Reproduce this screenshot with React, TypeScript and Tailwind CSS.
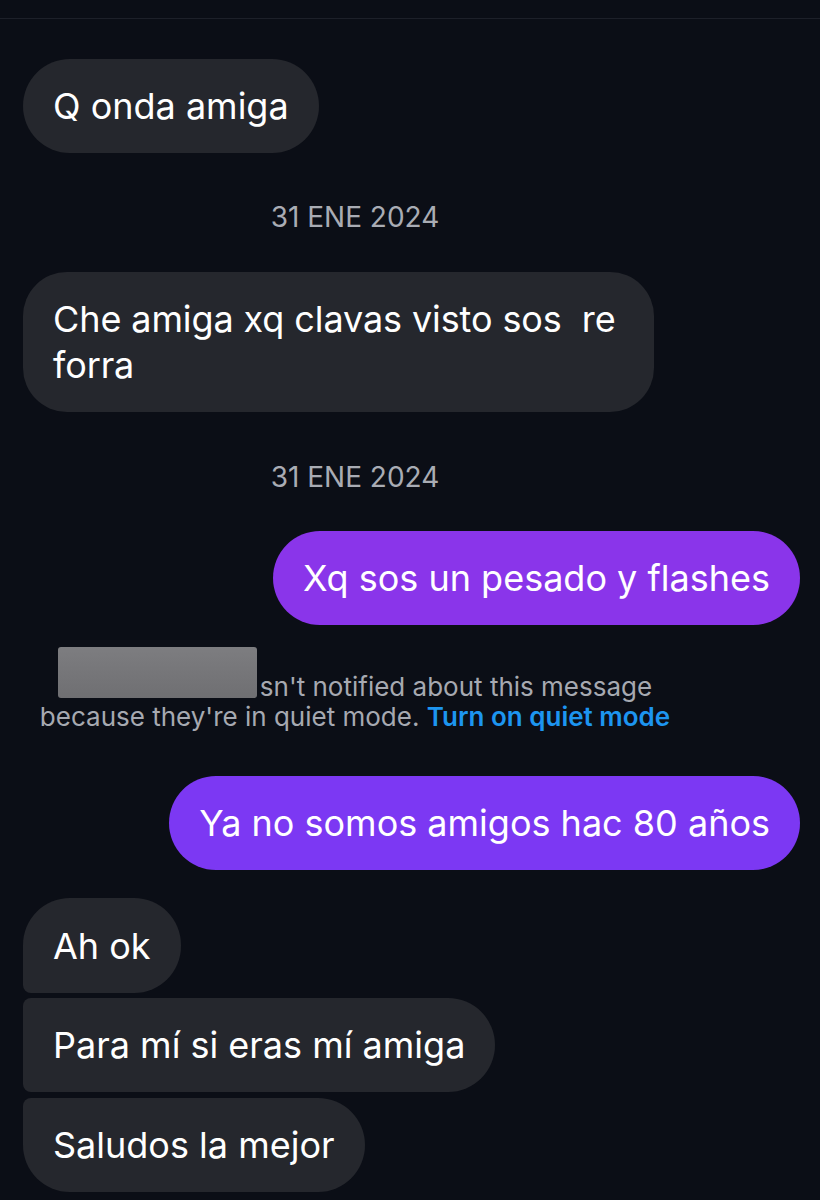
import React from "react";

const font = { fontFamily: "Inter, 'Noto Sans', sans-serif" };

export default function App() {
  return (
    <div
      className="w-[820px] h-[1200px] bg-[#0b0e16] overflow-hidden text-white"
      style={font}
    >
      <div className="h-[18px]" />
      <div className="h-px bg-[#1d2029]" />
      <div className="flex flex-col pl-[23px] pr-[20px] pt-[40px]">
        <div className="self-start h-[94px] px-[30px] flex items-center rounded-full bg-[#25272d] text-[36px] leading-[46px]">
          Q onda amiga
        </div>

        <div className="w-[664px] mt-[48px] text-center text-[28px] leading-[32px] text-[#a9acb4]">
          31 ENE 2024
        </div>

        <div className="self-start mt-[39px] w-[631px] pl-[30px] py-[24px] rounded-[44px] bg-[#25272d] text-[36px] leading-[46px] tracking-[-0.1px] whitespace-pre">
          {"Che amiga xq clavas visto sos  re"}
          <br />
          forra
        </div>

        <div className="w-[664px] mt-[49px] text-center text-[28px] leading-[32px] text-[#a9acb4]">
          31 ENE 2024
        </div>

        <div className="self-end mt-[38px] h-[94px] px-[30px] flex items-center rounded-full bg-[#8a35ea] text-[36px] leading-[46px]">
          Xq sos un pesado y flashes
        </div>

        <div className="w-[664px] mt-[22px] text-center text-[26px] leading-[30px] text-[#a6a9b1]">
          <div className="flex items-end justify-center">
            <span className="inline-block w-[199px] h-[51px] rounded-[3px] bg-gradient-to-b from-[#7d7d80] to-[#6f6f72] mb-[4px]" />
            <span className="ml-[3px]">sn't notified about this message</span>
          </div>
          <div>
            because they're in quiet mode.{" "}
            <span className="text-[#1d95f0] font-semibold">Turn on quiet mode</span>
          </div>
        </div>

        <div className="self-end mt-[44px] h-[94px] px-[30px] flex items-center rounded-full bg-[#7c38f3] text-[36px] leading-[46px]">
          Ya no somos amigos hac 80 años
        </div>

        <div className="self-start mt-[28px] h-[95px] px-[30px] flex items-center rounded-t-[47px] rounded-br-[47px] rounded-bl-[8px] bg-[#25272d] text-[36px] leading-[46px]">
          Ah ok
        </div>
        <div className="self-start mt-[5px] h-[94px] px-[30px] flex items-center rounded-r-[47px] rounded-l-[8px] bg-[#25272d] text-[36px] leading-[46px]">
          Para mí si eras mí amiga
        </div>
        <div className="self-start mt-[6px] h-[94px] px-[30px] flex items-center rounded-r-[47px] rounded-bl-[47px] rounded-tl-[8px] bg-[#25272d] text-[36px] leading-[46px]">
          Saludos la mejor
        </div>
      </div>
    </div>
  );
}
